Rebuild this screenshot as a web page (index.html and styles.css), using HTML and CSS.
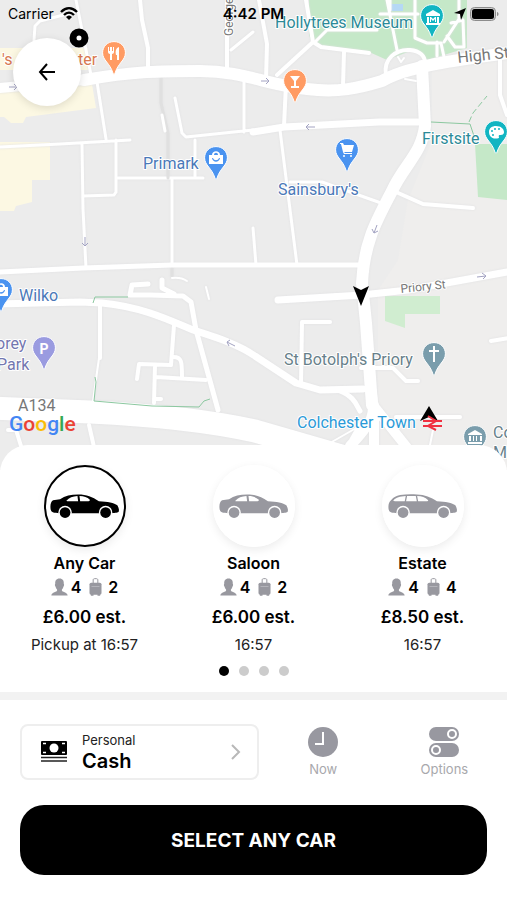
FILE: index.html
```html
<!DOCTYPE html>
<html lang="en">
<head>
  <meta charset="UTF-8" />
  <meta name="viewport" content="width=device-width, initial-scale=1.0" />
  <title>Choose your car</title>
  <link rel="stylesheet" href="styles.css">
</head>
<body>
  <!-- shared icons -->
  <svg class="sprite" aria-hidden="true">
    <symbol id="icon-saloon" viewBox="0 0 206 74">
      <path fill="currentColor" d="M2 46C0 34 2 21 9 18L30 15C45 5 62 1 84 1c26 0 42 7 62 20 26 1 46 5 55 12 4 7 6 13 4 20-1 3-10 3-21 4H27C14 56 4 56 2 46z" />
      <path class="cutout" d="M49 20C57 11 68 7 82 6l2 15H52c-4 0-4-1-3-1zM88 6c14 0 23 4 31 11 0 3-1 4-4 4H90z" />
      <circle class="cutout" cx="45" cy="55" r="20" />
      <circle class="cutout" cx="166" cy="55" r="20" />
      <circle fill="currentColor" cx="45" cy="55" r="16" />
      <circle fill="currentColor" cx="166" cy="55" r="16" />
    </symbol>
    <symbol id="icon-estate" viewBox="0 0 206 74">
      <path fill="currentColor" d="M2 46C0 34 2 23 9 18 18 9 24 5 36 3 52 0 70 0 86 1c24 1 42 8 60 20 26 1 46 5 55 12 4 7 6 13 4 20-1 3-10 3-21 4H27C14 56 4 56 2 46z" />
      <path class="cutout" d="M16 19C25 10 35 7 53 6l-3 15H21c-5 0-6-1-5-2zM57 6h26l3 15H54zM87 6c14 0 24 4 33 12 0 2-2 3-4 3H90z" />
      <circle class="cutout" cx="45" cy="55" r="20" />
      <circle class="cutout" cx="166" cy="55" r="20" />
      <circle fill="currentColor" cx="45" cy="55" r="16" />
      <circle fill="currentColor" cx="166" cy="55" r="16" />
    </symbol>
    <symbol id="icon-person" viewBox="0 0 52 54">
      <path fill="currentColor" d="M26 1c10 0 14 7 13 16 2 2 1 7-1 9-1 5-4 7-5 10 0 8 17 5 18 17H1c1-12 18-9 18-17-1-3-4-5-5-10-2-2-3-7-1-9C12 8 16 1 26 1z" />
    </symbol>
    <symbol id="icon-bag" viewBox="0 0 38 54">
      <path fill="none" stroke="currentColor" stroke-width="3" d="M12 15V6c0-3 2-4 4-4h6c2 0 4 1 4 4v9" />
      <rect fill="currentColor" x="1" y="14" width="36" height="36" rx="5" />
      <path fill="currentColor" d="M5 48h8v5H5zM25 48h8v5h-8z" />
      <path stroke="#fff" stroke-width="2" opacity=".5" d="M7 25h24" />
    </symbol>
    <symbol id="pin" viewBox="0 0 24 34">
      <path stroke="#fff" stroke-width="1" d="M12 .6C5.400 .6.6 5.500.6 11.800c0 7.600 7.400 10.200 10.400 20.400.3 1.300 1.700 1.300 2 0 3-10.200 10.400-12.800 10.400-20.400C23.400 5.500 18.600.6 12 .6z" />
    </symbol>
  </svg>

  <main class="screen">
    <section class="map" aria-label="Map">
      <svg class="map-canvas" viewBox="0 0 507 470" preserveAspectRatio="xMidYMin slice">
        <rect class="land" width="507" height="470" />
        <path class="land-light" d="M507 60H432v80l-24 60-10 60-20 30v180h129z" />

        <!-- shopping blocks -->
        <path class="yellow" d="M0 48h88v22H0zM0 90l92-6 4 24-70 9-3 6H11l-7-6H0zM0 142h50v38H32v22l-16 4-2 5H0z" />

        <!-- parks -->
        <path class="park" d="M309 0h158v48l-40 12-14-10-26 10-20-9-54-6-4-10z" />
        <path class="park" d="M475 144h32v56l-29-3z" />
        <path class="park-light" d="M385 296h55v18h-35v14l-20-7z" />
        <rect class="water" x="389" y="4" width="14" height="7" />

        <g class="roads">
          <path class="narrow" d="M76 0l5 25 10 50M34 40l1-14 5-5 35-9M97 82l9 57M0 147l60-3 70-4M82 144l1 65 3 59M116 140v52l-2 3-31 1M118 178h85M172 178v87M195 140v38M175 98l7 35 4 4 67-7M244 82v50M231 50l22-18" />
          <path class="alley" d="M161 78v25l7 30v45M172 268v8" />
          <path class="narrow" d="M162 115l3 16" />
          <path class="street" d="M140 0l2 20 6 28v20M227 0v68M259 0l8 44-1 36M306 0l7 42-36 33M313 42l8 5 48 6M344 52l-1 34M286 84l-2 42" />
          <path class="narrow" d="M315 42l12-12h50M387 0l10 50M415 0v38l12 5h14l3 14M437 42v14M444 42l15-23V0M447 36l8 11h9l-1-27-12 3M380 14h38M390 10V0" />
          <path class="street" d="M386 75c-3-16 10-26 24-25 10 1 15 6 15 13" />
          <path class="track" d="M398 57l3 5 3-4M405 79l11 2" />
          <path class="street" d="M500 60v35l7 20" />
          <path class="local" d="M253 132l31-5M0 272l83-4 89-3h189" />
          <path class="minor" d="M253 132l31-5 95-5h46" />
          <path class="narrow" d="M280 130l4 32 13 103M290 182h32l59 21M253 228l3 37" />
          <path class="street" d="M396 192l27 12 50 4" />
          <path class="minor" d="M278 300l84-5 46-5 99-18" />
          <path class="main" d="M84 80c50-9 78-9 116-9 45 0 65 14 107 18 31 4 52-1 75-8 27-16 84-22 125-28" />
          <path class="side" d="M0 88l84-8" />
          <path class="main" d="M422 66l3 60c-3 27-21 39-33 65-16 30-28 52-30 92l4 40 6 82" />
          <path class="minor" d="M-4 304l84-2 22 1c40 4 65 16 91 27 22 7 45 14 62 26l41 27 24 7 43-1" />
          <path class="local" d="M340 391c15 6 16 14 20 20M196 330l22 80M196 330l-5-28-8-6-32-1h-21l2-10 16-1M162 280v8l12 6" />
          <path class="street" d="M174 325l-3 40-32-1-2 15M155 365l-1 38M156 377l50 3M172 357c10-1 10 5 10 20M155 399h6M100 303v55M301 384l1-62h28M361 368h32l13 13h12M396 417h64M491 341l18-3" />
          <path class="track" d="M99 358l-6 43M172 278c8-1 12 1 15 3M206 287l3 12" />
          <path class="street" d="M89 425l5 22M8 430h8l5 16" />
          <path class="trunk" d="M-10 408l100 4c65 3 115 8 165 19l90 26" />
          <path class="side" d="M372 394c3 20 2 27-22 52M373 405l36 45M374 405v45M363 425l-14 25" />
          <path class="track" d="M372 419l-42 24M433 430l-4 20" />
        </g>

        <path class="path" d="M93 303l2-6h33M95 377l1 5-2 19 58 5 47 1 5-6 6-2M431 122l39 2 6 18" />
        <path class="path dashed" d="M469 122l4-9 14-17" />

        <!-- one way arrows -->
        <path class="arrows" d="M9 87h8M14 84l3 3-3 3M261 81h8M266 78l3 3-3 3M315 127h-9M309 124l-3 3 3 3M85 237v9M82 243l3 3 3-3M377 225l-3 8M372 229l2 4 4-2M477 277l9-1M482 273l4 3-3 3M235 346l-8-4M230 340l-3 2 2 4" />

        <!-- place labels -->
        <g class="labels">
          <text class="orange" x="2" y="65">'s</text>
          <text class="orange" x="78" y="65">ter</text>
          <text class="teal" x="275" y="28">Hollytrees Museum</text>
          <text class="teal" x="422" y="144">Firstsite</text>
          <text class="blue" x="143" y="169">Primark</text>
          <text class="blue" x="278" y="195">Sainsbury's</text>
          <text class="blue" x="19" y="301">Wilko</text>
          <text class="violet" x="-4" y="349">orey</text>
          <text class="violet" x="-3" y="370">Park</text>
          <text class="slate" x="284" y="365">St Botolph's Priory</text>
          <text class="slate" x="493" y="438">Co</text>
          <text class="slate" x="493" y="458">Mu</text>
          <text class="station" x="297" y="428">Colchester Town</text>
          <text class="road" x="18" y="411">A134</text>
          <text class="road" transform="translate(458 63) rotate(-6)">High St</text>
          <text class="road small" transform="translate(401 293) rotate(-6)">Priory St</text>
          <text class="road small" transform="translate(233 36) rotate(-90)">George</text>
        </g>

        <!-- pins -->
        <g fill="#ff9b63">
          <use href="#pin" x="102" y="41" width="24" height="34" />
          <use href="#pin" x="283" y="69" width="24" height="34" />
        </g>
        <g fill="#12b5c2">
          <use href="#pin" x="420" y="4" width="24" height="34" />
          <use href="#pin" x="484" y="120" width="24" height="34" />
        </g>
        <g fill="#4a93f0">
          <use href="#pin" x="204" y="146" width="24" height="34" />
          <use href="#pin" x="335" y="138" width="24" height="34" />
          <use href="#pin" x="-11" y="278" width="24" height="34" />
        </g>
        <use href="#pin" x="32" y="336" width="24" height="34" fill="#9a9be0" />
        <g fill="#7a9dac">
          <use href="#pin" x="422" y="342" width="24" height="34" />
          <use href="#pin" x="463" y="425" width="24" height="34" />
        </g>
        <g class="pin-glyph">
          <path d="M108 47v5c0 1 1 2 2 2v6h2v-6c1 0 2-1 2-2v-5h-1v4h-1v-4h-2v4h-1v-4zM119 47c-3 1-4 4-3 8h1v5h2z" />
          <path d="M290 76h10l-4 5v5h3v2h-8v-2h3v-5z" />
          <path d="M426 14l7-4 7 4v2h-14zM427 17h2v6h-2zM437 17h2v6h-2zM426 23h14v2h-14zM430 22v-5h1l2 2 2-2h1v5h-1v-3l-2 2-2-2v3z" />
          <path fill-rule="evenodd" d="M496 126c5 0 8 3 8 6s-3 3-4 3c-2 0-1 2-1 3-7 2-10-2-10-6s3-6 7-6zm-4 4a1 1 0 1 0 0 2 1 1 0 0 0 0-2zm3-2a1 1 0 1 0 0 2 1 1 0 0 0 0-2zm4 0a1 1 0 1 0 0 2 1 1 0 0 0 0-2zm-6 6a1 1 0 1 0 0 2 1 1 0 0 0 0-2z" />
          <path fill-rule="evenodd" d="M209 155h3c0-5 8-5 8 0h3v9h-14zm5 0h4c0-3-4-3-4 0zm-2 3c1 5 7 5 8 0h-1c-1 3-5 3-6 0z" />
          <path d="M340 143h3l1 2h10l-2 7h-8l1 1h7v1h-8l-1-2-2-8h-1z" />
          <circle cx="344" cy="156" r="1" /><circle cx="351" cy="156" r="1" />
          <path fill-rule="evenodd" d="M-5 287h3c0-5 7-5 7 0h3v9H-5zm4 0h4c0-3-4-3-4 0zm-2 3c1 5 7 5 8 0H4c-1 3-5 3-6 0z" />
          <path d="M433 346h2v4h4v2h-4v10h-2v-10h-4v-2h4z" />
          <path d="M468 434l7-4 7 4v1h-14zM469 436h2v5h-2zM473 436h1v5h-1zM476 436h1v5h-1zM480 436h2v5h-2zM468 442h14v2h-14z" />
        </g>
        <text class="parking" x="44" y="354">P</text>

        <!-- nearby cars -->
        <path d="M353 286l8 4 8-4-8 20zM420 421l9-15 9 15-9-4z" />
        <path class="rail" d="M423 421h19M423 426h19M428 416l8 5-8 5 8 4" />
        <circle cx="79" cy="38" r="6" fill="#fff" stroke="#000" stroke-width="7" />

        <text class="google" x="9" y="431"><tspan fill="#4285f4">G</tspan><tspan fill="#ea4335">o</tspan><tspan fill="#fbbc05">o</tspan><tspan fill="#4285f4">g</tspan><tspan fill="#34a853">l</tspan><tspan fill="#ea4335">e</tspan></text>
      </svg>

      <header class="status-bar">
        <span class="carrier">Carrier
          <svg width="18" height="14" viewBox="0 0 18 14" aria-hidden="true">
            <path fill="none" stroke="#000" stroke-width="2.400" d="M1 5c5-5 11-5 16 0M4 8c3-3 7-3 10 0" />
            <path d="M6 10c2-2 4-2 6 0l-3 3z" />
          </svg>
        </span>
        <span class="time">4:42 PM</span>
        <span class="battery">
          <svg width="12" height="12" viewBox="0 0 12 12" aria-hidden="true"><path d="M12 0L7 12 6 6 0 5z" /></svg>
          <svg width="29" height="14" viewBox="0 0 29 14" aria-hidden="true">
            <rect x=".5" y=".5" width="25" height="13" rx="4" fill="#ccc" stroke="#8c8c8c" />
            <rect x="2" y="2" width="22" height="10" rx="2.500" />
            <path fill="#8c8c8c" d="M27 5c2 0 2 4 0 4z" />
          </svg>
        </span>
      </header>

      <button class="back" type="button" aria-label="Back">
        <svg width="18" height="18" viewBox="0 0 18 18" aria-hidden="true">
          <path fill="none" stroke="#000" stroke-width="2" d="M17 9H2M9 1L2 9l7 8" />
        </svg>
      </button>
    </section>

    <form class="sheet">
      <div class="cars">
        <label class="car">
          <input type="radio" name="car" value="any" checked>
          <span class="car-circle"><svg class="car-icon"><use href="#icon-saloon" /></svg></span>
          <span class="car-name">Any Car</span>
          <span class="capacity">
            <svg class="person"><use href="#icon-person" /></svg><b>4</b>
            <svg class="bag"><use href="#icon-bag" /></svg><b>2</b>
          </span>
          <span class="price">£6.00 est.</span>
          <span class="pickup">Pickup at 16:57</span>
        </label>
        <label class="car">
          <input type="radio" name="car" value="saloon">
          <span class="car-circle"><svg class="car-icon"><use href="#icon-saloon" /></svg></span>
          <span class="car-name">Saloon</span>
          <span class="capacity">
            <svg class="person"><use href="#icon-person" /></svg><b>4</b>
            <svg class="bag"><use href="#icon-bag" /></svg><b>2</b>
          </span>
          <span class="price">£6.00 est.</span>
          <span class="pickup">16:57</span>
        </label>
        <label class="car">
          <input type="radio" name="car" value="estate">
          <span class="car-circle"><svg class="car-icon"><use href="#icon-estate" /></svg></span>
          <span class="car-name">Estate</span>
          <span class="capacity">
            <svg class="person"><use href="#icon-person" /></svg><b>4</b>
            <svg class="bag"><use href="#icon-bag" /></svg><b>4</b>
          </span>
          <span class="price">£8.50 est.</span>
          <span class="pickup">16:57</span>
        </label>
      </div>

      <div class="dots">
        <button class="dot active" type="button" aria-label="Page 1"></button>
        <button class="dot" type="button" aria-label="Page 2"></button>
        <button class="dot" type="button" aria-label="Page 3"></button>
        <button class="dot" type="button" aria-label="Page 4"></button>
      </div>

      <div class="booking">
        <div class="booking-row">
          <button class="payment" type="button">
            <svg width="26" height="22" viewBox="0 0 26 22" aria-hidden="true">
              <rect y="0" width="26" height="14" rx="1" />
              <circle cx="13" cy="7" r="4.500" fill="#fff" />
              <path stroke="#fff" stroke-width="1.500" d="M2 2.500h3M21 2.500h3M2 11.500h3M21 11.500h3" />
              <path stroke="#222" stroke-width="1.600" d="M0 16.500h26M0 20h26" />
            </svg>
            <span class="payment-text">
              <span class="payment-type">Personal</span>
              <span class="payment-name">Cash</span>
            </span>
            <svg class="chevron" width="10" height="16" viewBox="0 0 10 16" aria-hidden="true">
              <path fill="none" stroke="#b8b8b8" stroke-width="2" d="M1 1l7 7-7 7" />
            </svg>
          </button>
          <button class="tool" type="button">
            <svg width="30" height="30" viewBox="0 0 30 30" aria-hidden="true">
              <circle cx="15" cy="15" r="15" fill="#9898a0" />
              <path fill="none" stroke="#fff" stroke-width="2" d="M15 5v12H7" />
            </svg>
            Now
          </button>
          <button class="tool" type="button">
            <svg width="30" height="30" viewBox="0 0 30 30" aria-hidden="true">
              <rect width="30" height="14" rx="7" fill="#9898a0" />
              <rect y="16" width="30" height="14" rx="7" fill="#9898a0" />
              <circle cx="23" cy="7" r="4" fill="none" stroke="#fff" stroke-width="2" />
              <circle cx="7" cy="23" r="4" fill="none" stroke="#fff" stroke-width="2" />
            </svg>
            Options
          </button>
        </div>
        <button class="select-btn" type="submit">SELECT ANY CAR</button>
      </div>
    </form>
  </main>
</body>
</html>
```
FILE: styles.css
```css
* {
  margin: 0;
  padding: 0;
  box-sizing: border-box;
}

body {
  font-family: 'Inter', sans-serif;
  background: #fff;
  color: #000;
}

button {
  font-family: inherit;
  color: inherit;
  background: none;
  border: none;
  cursor: pointer;
}

.sprite {
  position: absolute;
  width: 0;
  height: 0;
}

.cutout {
  fill: #fff;
}

.screen {
  display: flex;
  flex-direction: column;
  min-height: 100vh;
}

/* map */
.map {
  position: relative;
  flex: 1;
  min-height: 300px;
  overflow: hidden;
}

.map-canvas {
  position: absolute;
  inset: 0;
  width: 100%;
  height: 100%;
}

.land { fill: #ececec; }
.land-light { fill: #efeeed; }
.yellow { fill: #fcf8e3; }
.park { fill: #c5e8c8; }
.park-light { fill: #d0edd0; }
.water { fill: #b5d8f5; }

.roads {
  fill: none;
  stroke: #fff;
  stroke-linecap: round;
  stroke-linejoin: round;
  filter: drop-shadow(0 0 1px #e0e0e2);
}

.track { stroke-width: 2px; }
.narrow { stroke-width: 3px; }
.street { stroke-width: 4px; }
.local { stroke-width: 5px; }
.minor { stroke-width: 7px; }
.side { stroke-width: 10px; }
.main { stroke-width: 12px; }
.trunk { stroke-width: 23px; }

.alley {
  stroke: #e0e0e0;
  stroke-width: 3px;
}

.path {
  fill: none;
  stroke: #8cc8a0;
  stroke-width: 1px;
}

.dashed {
  stroke-dasharray: 6 3;
}

.arrows {
  fill: none;
  stroke: #a3a3c2;
  stroke-width: 1px;
}

.labels {
  font-family: 'Roboto', sans-serif;
  font-size: 16px;
  stroke: #fff;
  stroke-width: 2px;
  stroke-linejoin: round;
  paint-order: stroke;
}

.orange { fill: #d9794f; }
.teal { fill: #2b8a98; }
.blue { fill: #4a78b8; }
.violet { fill: #7376b0; }
.slate { fill: #677f8a; }
.station { fill: #2a9ad8; }
.road { fill: #777; }
.small { font-size: 12px; }

.pin-glyph {
  fill: #fff;
}

.parking {
  font: 700 14px 'Roboto', sans-serif;
  fill: #fff;
  text-anchor: middle;
}

.rail {
  fill: none;
  stroke: #f03040;
  stroke-width: 2px;
}

.google {
  font: 500 21px 'Roboto', sans-serif;
}

.status-bar {
  position: absolute;
  top: 0;
  left: 0;
  right: 0;
  display: grid;
  grid-template-columns: 1fr auto 1fr;
  align-items: center;
  padding: 4px 8px;
  font-size: 15px;
  line-height: 20px;
}

.carrier,
.battery {
  display: flex;
  align-items: center;
  gap: 6px;
}

.carrier {
  font-size: 14px;
}

.battery {
  justify-content: flex-end;
  gap: 4px;
}

.time {
  font-weight: 600;
}

.back {
  position: absolute;
  top: 38px;
  left: 13px;
  display: flex;
  align-items: center;
  justify-content: center;
  width: 68px;
  height: 68px;
  border-radius: 50%;
  background: #fff;
  box-shadow: 0 2px 8px rgba(0, 0, 0, 0.12);
}

/* bottom sheet */
.sheet {
  position: relative;
  margin-top: -25px;
  padding-top: 20px;
  border-radius: 28px 28px 0 0;
  background: #fff;
}

.cars {
  display: grid;
  grid-template-columns: repeat(3, 1fr);
}

.car {
  position: relative;
  display: flex;
  flex-direction: column;
  align-items: center;
  line-height: 20px;
  cursor: pointer;
}

.car input {
  position: absolute;
  opacity: 0;
}

.car-circle {
  display: flex;
  align-items: center;
  justify-content: center;
  width: 82px;
  height: 82px;
  margin-bottom: 6px;
  border: 2px solid #fff;
  border-radius: 50%;
  color: #98989f;
  box-shadow: 0 3px 10px rgba(0, 0, 0, 0.08);
}

.car input:checked + .car-circle {
  border-color: #000;
  color: #000;
}

.car-icon {
  width: 69px;
  height: 25px;
}

.car-name {
  margin-bottom: 4px;
  font-size: 16px;
  font-weight: 600;
}

.capacity {
  display: flex;
  align-items: center;
  gap: 3px;
  margin-bottom: 10px;
  font-size: 16px;
  color: #98989f;
}

.capacity b {
  font-weight: 600;
  color: #000;
}

.person {
  width: 17px;
  height: 18px;
}

.bag {
  width: 13px;
  height: 18px;
  margin: 0 3px 0 5px;
}

.price {
  margin-bottom: 8px;
  font-size: 17px;
  font-weight: 600;
}

.pickup {
  font-size: 15px;
  color: #222;
}

.dots {
  display: flex;
  justify-content: center;
  gap: 10px;
  padding: 11px 0 16px;
}

.dot {
  width: 10px;
  height: 10px;
  border-radius: 50%;
  background: #ccc;
}

.dot.active {
  background: #000;
}

/* payment and confirm */
.booking {
  padding: 24px 0 25px;
  border-top: 8px solid #f2f2f2;
}

.booking-row {
  display: grid;
  grid-template-columns: 2fr 1fr 1fr;
  padding: 0 2px 0 20px;
  margin-bottom: 25px;
}

.payment {
  display: flex;
  align-items: center;
  gap: 15px;
  height: 56px;
  margin-right: 4px;
  padding: 0 16px 0 19px;
  border: 2px solid #eee;
  border-radius: 8px;
  text-align: left;
}

.payment-text {
  display: flex;
  flex-direction: column;
}

.payment-type {
  font-size: 13px;
  line-height: 18px;
  color: #222;
}

.payment-name {
  font-size: 20px;
  font-weight: 600;
  line-height: 24px;
}

.chevron {
  margin-left: auto;
}

.tool {
  display: flex;
  flex-direction: column;
  align-items: center;
  gap: 3px;
  padding-top: 3px;
  font-size: 13px;
  line-height: 18px;
  color: #a8a8ac;
}

.select-btn {
  display: block;
  width: calc(100% - 40px);
  height: 70px;
  margin: 0 auto;
  border-radius: 24px;
  background: #000;
  color: #fff;
  font-size: 19px;
  font-weight: 700;
}
```
